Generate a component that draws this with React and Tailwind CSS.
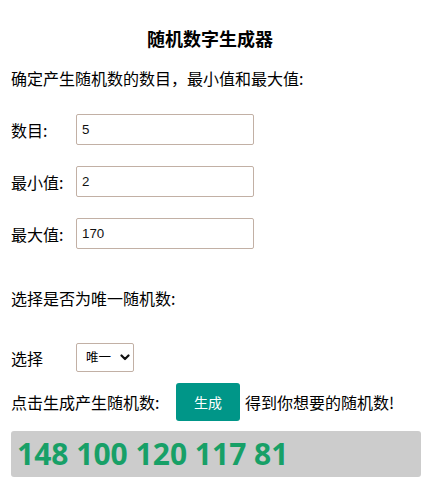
import React from "react";

function Field({ label, value }) {
  return (
    <div className="flex items-center">
      <span className="w-[65px] text-[16px] leading-[24px]">{label}</span>
      <div className="w-[178px] h-[31px] border border-[#c2b0a5] rounded-[2px] flex items-center pl-[5px] text-[13.33px] text-[#111]" style={{ fontFamily: '"Liberation Sans", Arial, sans-serif' }}>
        {value}
      </div>
    </div>
  );
}

export default function App() {
  return (
    <div className="w-[431px] h-[483px] bg-white pl-[11px] pr-[10px] text-black" style={{ fontFamily: '"Noto Sans CJK SC", "Noto Sans", sans-serif' }}>
      <h2 className="pt-[26px] pr-[12px] text-center text-[18px] font-bold leading-[24px]">随机数字生成器</h2>
      <p className="mt-[16px] text-[16px] leading-[24px]">确定产生随机数的数目，最小值和最大值:</p>
      <div className="mt-[24px] flex flex-col gap-[21px]">
        <Field label="数目:" value="5" />
        <Field label="最小值:" value="2" />
        <Field label="最大值:" value="170" />
      </div>
      <p className="mt-[37px] text-[16px] leading-[24px]">选择是否为唯一随机数:</p>
      <div className="mt-[33px] flex items-center">
        <span className="w-[65px] text-[16px] leading-[24px]">选择</span>
        <div className="w-[58px] h-[29px] border border-[#c2b0a5] rounded-[2px] flex items-center pl-[9px] text-[12.5px] leading-none">
          <span className="w-[27px]">唯一</span>
          <svg width="10" height="7" viewBox="0 0 10 7" className="ml-[7px]">
            <path d="M1.5 1.5 L5 5 L8.5 1.5" fill="none" stroke="#111" strokeWidth="2.2" strokeLinecap="round" strokeLinejoin="round" />
          </svg>
        </div>
      </div>
      <div className="mt-[11px] flex items-center">
        <span className="text-[16px] leading-[24px] w-[165px]">点击生成产生随机数:</span>
        <button className="w-[64px] h-[38px] bg-[#009688] text-white text-[14px] rounded-[3px]">生成</button>
        <span className="ml-[5px] text-[16px] leading-[24px]">得到你想要的随机数!</span>
      </div>
      <div className="mt-[10px] h-[46px] bg-[#cccccc] rounded-[3px] flex items-center pl-[6px] text-[30px] font-bold text-[#17a067] leading-none" style={{ fontFamily: '"Noto Sans", sans-serif' }}>
        148 100 120 117 81
      </div>
    </div>
  );
}
